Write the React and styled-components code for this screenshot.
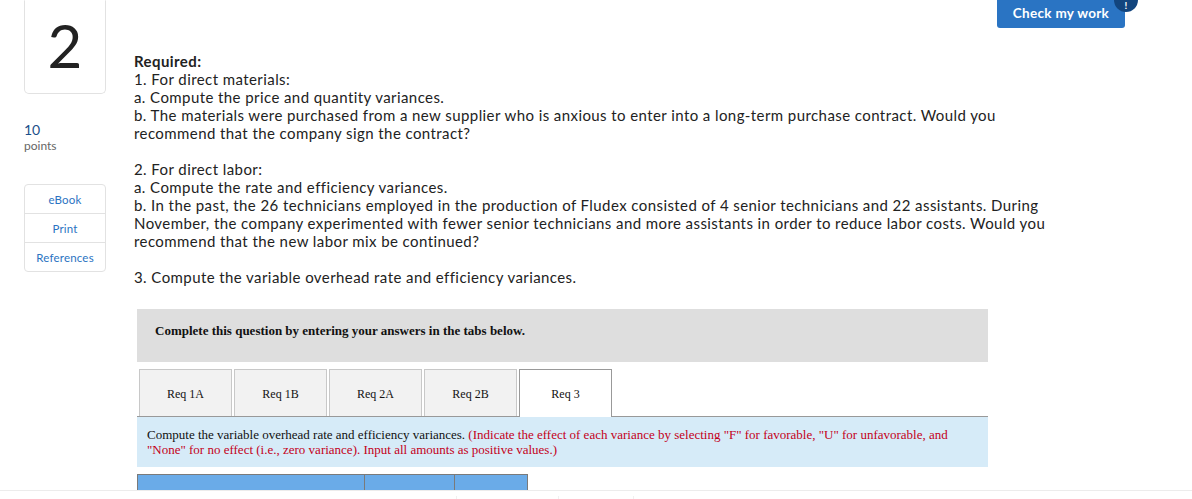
import React from 'react'
import styled, { createGlobalStyle } from 'styled-components'

const GlobalStyle = createGlobalStyle`
  html, body {
    margin: 0;
    padding: 0;
    background: #fff;
  }
  body {
    font-family: Lato, 'Open Sans', sans-serif;
    color: #222;
    overflow: hidden;
  }
`

const tabs = ['Req 1A', 'Req 1B', 'Req 2A', 'Req 2B', 'Req 3']

const App = () => {
  return (
    <>
      <GlobalStyle />
      <Page>
        <Side>
          <NumberBox>2</NumberBox>
          <Points>
            <span className='value'>10</span>
            <span className='label'>points</span>
          </Points>
          <LinkBox>
            <LinkRow>eBook</LinkRow>
            <LinkRow>Print</LinkRow>
            <LinkRow>References</LinkRow>
          </LinkBox>
        </Side>
        <Main>
          <TopBar>
            <CheckButton>
              Check my work
              <Badge>!</Badge>
            </CheckButton>
          </TopBar>
          <Question>
            <p>
              <strong>Required:</strong>
              <br />
              1. For direct materials:
              <br />
              a. Compute the price and quantity variances.
              <br />
              b. The materials were purchased from a new supplier who is anxious to enter into a long-term purchase contract. Would you
              <br />
              recommend that the company sign the contract?
            </p>
            <p>
              2. For direct labor:
              <br />
              a. Compute the rate and efficiency variances.
              <br />
              b. In the past, the 26 technicians employed in the production of Fludex consisted of 4 senior technicians and 22 assistants. During
              <br />
              November, the company experimented with fewer senior technicians and more assistants in order to reduce labor costs. Would you
              <br />
              recommend that the new labor mix be continued?
            </p>
            <p>3. Compute the variable overhead rate and efficiency variances.</p>
          </Question>
          <Panel>
            <Instructions>Complete this question by entering your answers in the tabs below.</Instructions>
            <TabRow>
              {tabs.map((t, i) => (
                <Tab key={t} $active={i === tabs.length - 1}>
                  {t}
                </Tab>
              ))}
            </TabRow>
            <InfoBox>
              Compute the variable overhead rate and efficiency variances.{' '}
              <span className='note'>
                (Indicate the effect of each variance by selecting "F" for favorable, "U" for unfavorable, and
                <br />
                "None" for no effect (i.e., zero variance). Input all amounts as positive values.)
              </span>
            </InfoBox>
            <TableHead>
              <HeadCell $w={228} />
              <HeadCell $w={90} />
              <HeadCell $w={73} />
            </TableHead>
          </Panel>
        </Main>
      </Page>
      <Footer>
        <FooterCell $w={445} />
        <FooterCell $w={101} />
        <FooterCell $w={74} />
      </Footer>
    </>
  )
}

export default App

const Page = styled.div`
  display: flex;
  align-items: flex-start;
  height: 490px;
  overflow: hidden;
`

const Side = styled.aside`
  display: flex;
  flex-direction: column;
  width: 82px;
  margin-left: 24px;
  flex-shrink: 0;
`

const NumberBox = styled.div`
  box-sizing: border-box;
  height: 94px;
  border: 1px solid #e2e2e2;
  border-top-color: transparent;
  border-radius: 0 0 5px 5px;
  display: flex;
  align-items: center;
  justify-content: center;
  font-size: 60px;
  font-weight: 400;
  color: #222;
  padding-bottom: 4px;
`

const Points = styled.div`
  display: flex;
  flex-direction: column;
  margin-top: 27px;
  .value {
    color: #1b4f8a;
    font-size: 14px;
    line-height: 17px;
  }
  .label {
    color: #666;
    font-size: 12px;
    line-height: 15px;
  }
`

const LinkBox = styled.div`
  margin-top: 31px;
  border: 1px solid #e2e2e2;
  border-radius: 4px;
  display: flex;
  flex-direction: column;
`

const LinkRow = styled.div`
  height: 28px;
  display: flex;
  align-items: center;
  justify-content: center;
  color: #2b73c2;
  font-size: 11.5px;
  letter-spacing: 0.2px;
  & + & {
    border-top: 1px solid #e2e2e2;
  }
`

const Main = styled.main`
  flex: 1;
  margin-left: 28px;
  margin-right: 67px;
  display: flex;
  flex-direction: column;
`

const TopBar = styled.div`
  display: flex;
  justify-content: flex-end;
  height: 52px;
`

const CheckButton = styled.button`
  position: relative;
  width: 128px;
  height: 28px;
  border: none;
  border-radius: 0 0 3px 3px;
  background: #2a74c3;
  color: #fff;
  font-family: Lato, sans-serif;
  font-weight: 700;
  font-size: 13.5px;
  letter-spacing: 0.3px;
  padding: 0 0 2px;
`

const Badge = styled.span`
  position: absolute;
  right: -13px;
  top: -12px;
  width: 24px;
  height: 24px;
  border-radius: 50%;
  background: #12457e;
  color: #fff;
  font-size: 10px;
  font-weight: 700;
  display: flex;
  align-items: flex-end;
  justify-content: center;
  line-height: 12px;
  padding-bottom: 1px;
  box-sizing: border-box;
`

const Question = styled.div`
  font-size: 15px;
  line-height: 18px;
  letter-spacing: 0.42px;
  color: #222;
  p {
    margin: 0 0 18px;
    white-space: nowrap;
  }
  p:last-child {
    margin-bottom: 0;
  }
  strong {
    font-weight: 700;
  }
`

const Panel = styled.section`
  margin-top: 23px;
  margin-left: 3px;
  width: 851px;
  font-family: 'Liberation Serif', 'Times New Roman', serif;
  font-size: 13px;
`

const Instructions = styled.div`
  background: #dedede;
  height: 53px;
  box-sizing: border-box;
  padding: 14px 18px;
  font-weight: 700;
  color: #111;
`

const TabRow = styled.div`
  display: flex;
  gap: 2px;
  padding: 7px 0 0 2px;
  border-bottom: 1px solid #999;
`

const Tab = styled.div`
  width: 93px;
  box-sizing: border-box;
  display: flex;
  align-items: center;
  justify-content: center;
  background: ${(p) => (p.$active ? '#fff' : '#f2f2f2')};
  border: 1px solid ${(p) => (p.$active ? '#999' : '#c8c8c8')};
  border-bottom: none;
  margin-bottom: ${(p) => (p.$active ? '-1px' : '0')};
  height: ${(p) => (p.$active ? '48px' : '47px')};
  color: #111;
  font-size: 12px;
  padding-top: 2px;
`

const InfoBox = styled.div`
  background: #d6ebf8;
  padding: 10px 10px 10px;
  line-height: 15px;
  color: #111;
  .note {
    color: #c4001a;
  }
`

const TableHead = styled.div`
  display: flex;
  margin-top: 7px;
  height: 18px;
`

const HeadCell = styled.div`
  box-sizing: border-box;
  width: ${(p) => p.$w}px;
  background: #6aabe8;
  border: 1px solid #7a7a7a;
  border-bottom: none;
  & + & {
    border-left: none;
  }
`

const Footer = styled.div`
  display: flex;
  border-top: 1px solid #ececec;
  height: 10px;
  padding-left: 11px;
`

const FooterCell = styled.div`
  width: ${(p) => p.$w}px;
  border-right: 1px solid #f0f0f0;
  margin-top: 5px;
`
